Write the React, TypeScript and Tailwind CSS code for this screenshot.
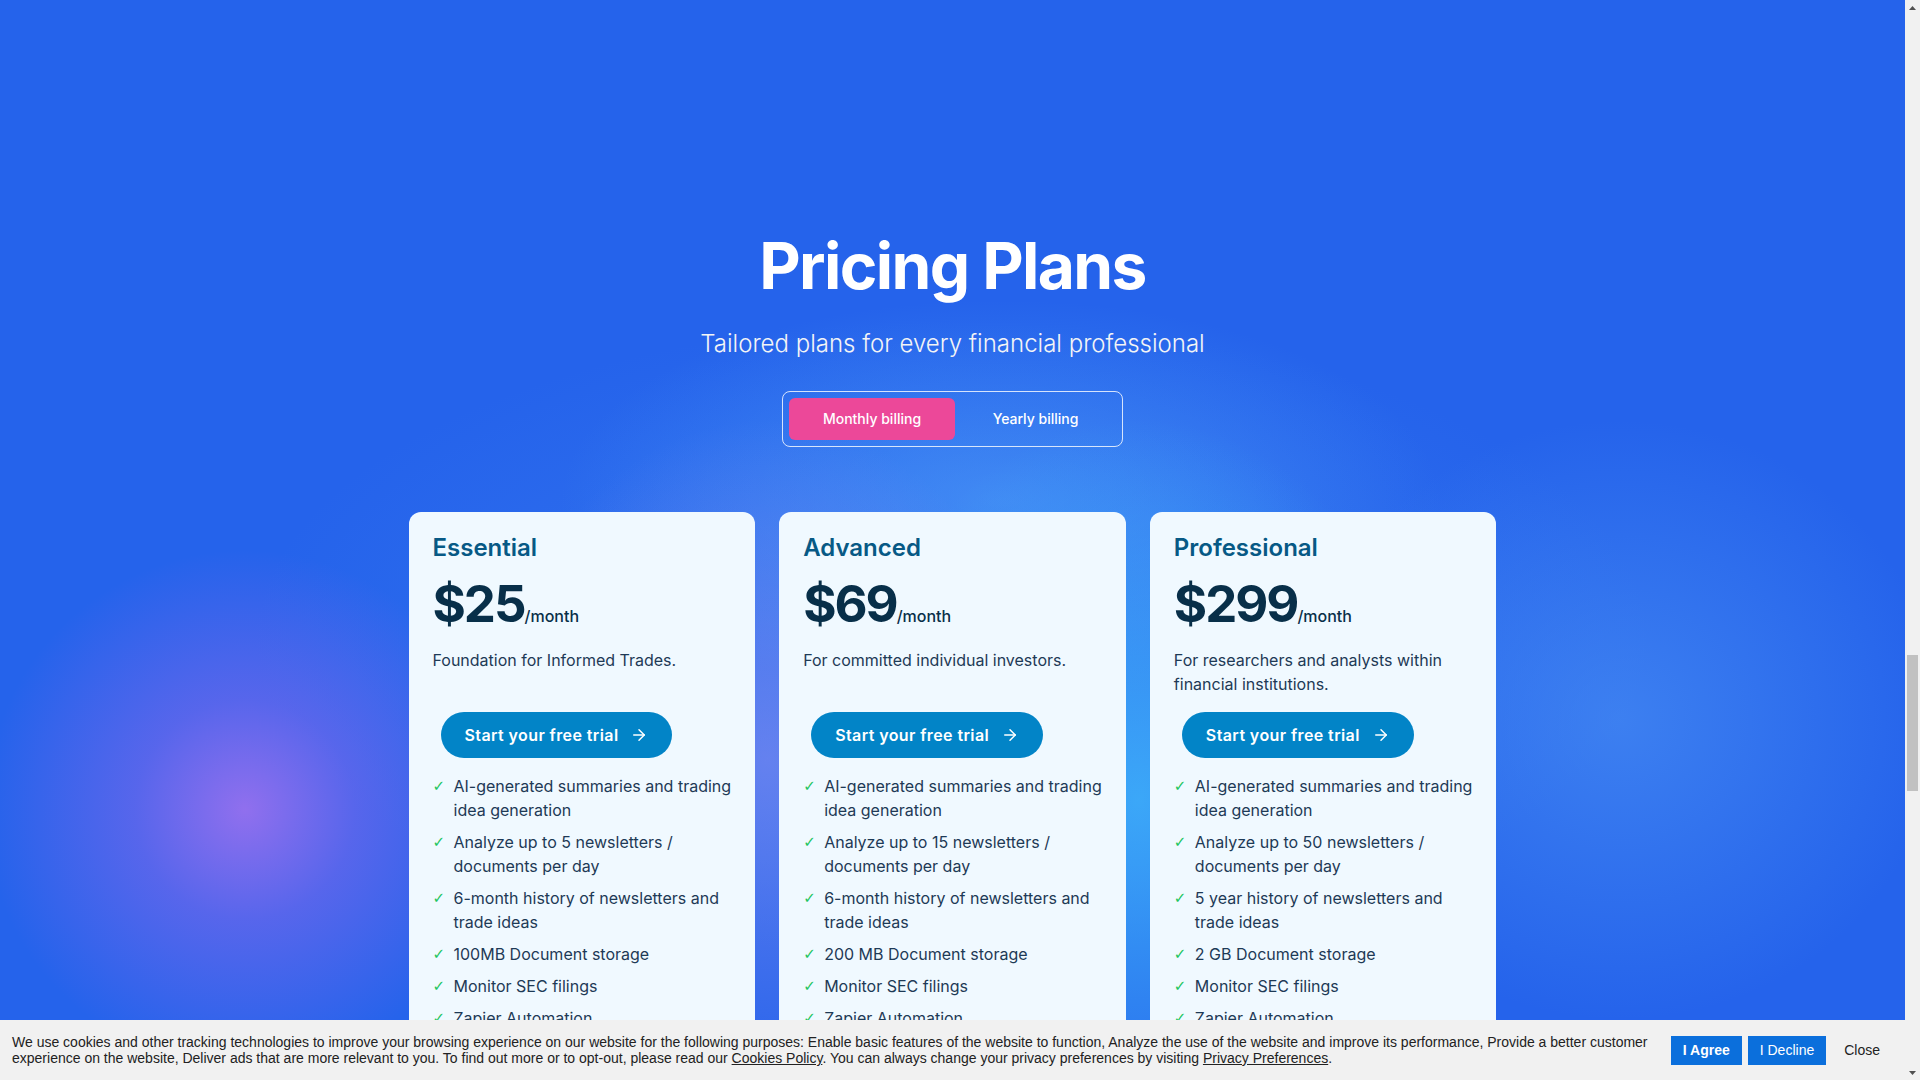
import React from 'react';
import { ArrowRight } from 'lucide-react';

interface Plan {
  name: string;
  price: string;
  blurb: string;
  features: string[];
}

const plans: Plan[] = [
  {
    name: 'Essential',
    price: '$25',
    blurb: 'Foundation for Informed Trades.',
    features: [
      'AI-generated summaries and trading idea generation',
      'Analyze up to 5 newsletters / documents per day',
      '6-month history of newsletters and trade ideas',
      '100MB Document storage',
      'Monitor SEC filings',
      'Zapier Automation',
    ],
  },
  {
    name: 'Advanced',
    price: '$69',
    blurb: 'For committed individual investors.',
    features: [
      'AI-generated summaries and trading idea generation',
      'Analyze up to 15 newsletters / documents per day',
      '6-month history of newsletters and trade ideas',
      '200 MB Document storage',
      'Monitor SEC filings',
      'Zapier Automation',
    ],
  },
  {
    name: 'Professional',
    price: '$299',
    blurb: 'For researchers and analysts within financial institutions.',
    features: [
      'AI-generated summaries and trading idea generation',
      'Analyze up to 50 newsletters / documents per day',
      '5 year history of newsletters and trade ideas',
      '2 GB Document storage',
      'Monitor SEC filings',
      'Zapier Automation',
    ],
  },
];

const PlanCard: React.FC<{ plan: Plan }> = ({ plan }) => (
  <div className="bg-[#f0f9ff] rounded-xl px-6 pt-5 pb-10">
    <h3 className="text-2xl leading-8 font-semibold text-[#075985]">{plan.name}</h3>
    <div className="mt-[14px] flex items-baseline text-[#082f49]">
      <span className="text-[51px] leading-[52px] font-bold tracking-[-0.04em]">{plan.price}</span>
      <span className="text-base font-medium">/month</span>
    </div>
    <p className="mt-[18px] h-12 text-base leading-6 text-[#1e3a56]">{plan.blurb}</p>
    <button className="mt-4 ml-2 h-[46px] px-6 rounded-full bg-[#0284c7] text-white text-base font-semibold tracking-wide flex items-center gap-3">
      Start your free trial
      <ArrowRight className="w-[18px] h-[18px]" strokeWidth={2} />
    </button>
    <ul className="mt-4 flex flex-col gap-2">
      {plan.features.map((f) => (
        <li key={f} className="flex items-start text-base leading-6 text-[#1e3a56]">
          <span className="w-[21px] shrink-0 text-[15px] font-bold text-[#22c55e] font-['DejaVu_Sans',sans-serif]">✓</span>
          <span>{f}</span>
        </li>
      ))}
    </ul>
  </div>
);

const CookieBanner = () => (
  <div className="fixed bottom-0 left-0 right-[15px] h-[60px] bg-[#f1f1f1] flex items-center pl-3 pr-[13px] font-['Liberation_Sans',Arial,sans-serif] text-[14px] text-[#222]">
    <p className="flex-1 leading-4 mr-4">
      We use cookies and other tracking technologies to improve your browsing experience on our website for the following purposes: Enable basic features of the website to function, Analyze the use of the website and improve its performance, Provide a better customer experience on the website, Deliver ads that are more relevant to you. To find out more or to opt-out, please read our{' '}
      <a className="underline">Cookies Policy</a>. You can always change your privacy preferences by visiting{' '}
      <a className="underline">Privacy Preferences</a>.
    </p>
    <div className="flex gap-[6px]">
      <button className="h-[29px] px-3 bg-[#0b6fdc] text-white font-bold">I Agree</button>
      <button className="h-[29px] px-3 bg-[#0b6fdc] text-white">I Decline</button>
      <button className="h-[29px] px-3 text-[#222]">Close</button>
    </div>
  </div>
);

// classic browser scrollbar, page scrolled part way down
const Scrollbar = () => (
  <aside className="w-[15px] shrink-0 bg-[#f1f1f1] flex flex-col">
    <div className="h-[15px] flex items-center justify-center">
      <svg width="7" height="4" viewBox="0 0 7 4"><path d="M3.5 0L7 4H0z" fill="#505050" /></svg>
    </div>
    <div className="flex-1 px-[2px]">
      <div className="mt-[640px] h-[136px] bg-[#c1c1c1]" />
    </div>
    <div className="h-[15px] flex items-center justify-center">
      <svg width="7" height="4" viewBox="0 0 7 4"><path d="M0 0h7L3.5 4z" fill="#505050" /></svg>
    </div>
  </aside>
);

export default function App() {
  return (
    <div className="h-screen flex overflow-hidden font-['Inter',sans-serif]">
      <main className="flex-1 overflow-hidden">
        <section className="h-full pt-[234px] bg-[#2563eb] bg-[image:radial-gradient(circle_at_245px_810px,rgba(150,112,238,0.95),rgba(128,104,236,0.55)_110px,transparent_260px),radial-gradient(ellipse_300px_380px_at_1138px_800px,rgba(62,178,250,0.85),transparent),radial-gradient(ellipse_280px_340px_at_767px_760px,rgba(130,140,240,0.65),transparent),radial-gradient(ellipse_320px_300px_at_1620px_720px,rgba(84,156,246,0.5),transparent),radial-gradient(ellipse_440px_200px_at_1000px_500px,rgba(84,166,250,0.5),transparent),radial-gradient(ellipse_700px_320px_at_952px_640px,rgba(80,150,246,0.35),transparent)]">
          <div className="flex flex-col items-center text-center">
            <h2 className="text-[64px] leading-[64px] font-bold text-white tracking-tight">Pricing Plans</h2>
            <p className="mt-[30px] text-2xl leading-8 font-light text-gray-100">Tailored plans for every financial professional</p>
            <div className="mt-[31px] flex p-[6px] rounded-lg border border-white/80">
              <button className="w-[166px] h-[42px] rounded-md bg-[#ec4899] text-white text-sm font-medium">Monthly billing</button>
              <button className="w-[161px] h-[42px] rounded-md text-white text-sm font-medium">Yearly billing</button>
            </div>
          </div>

          <div className="mt-[65px] mx-auto max-w-[1088px] grid grid-cols-3 gap-6">
            {plans.map((p) => (
              <PlanCard key={p.name} plan={p} />
            ))}
          </div>
        </section>
      </main>
      <Scrollbar />
      <CookieBanner />
    </div>
  );
}
